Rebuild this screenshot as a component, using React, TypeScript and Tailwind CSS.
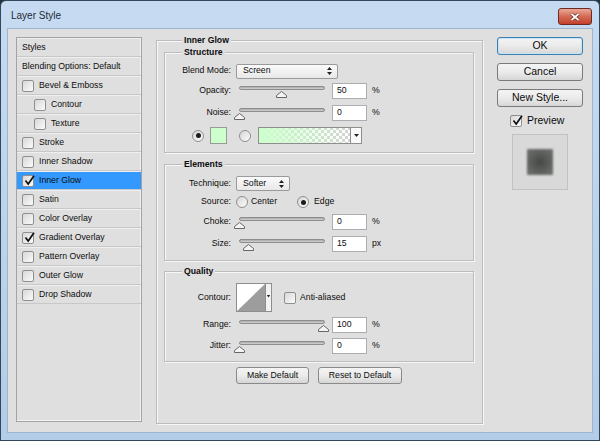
import React from 'react';

const Check = ({ checked }: { checked?: boolean }) => (
  <span className="relative flex h-[12px] w-[12px] shrink-0 items-center justify-center rounded-[2px] border border-[#8e8f8f] bg-gradient-to-br from-[#d8d8d8] to-[#fbfbfb]">
    {checked && (
      <svg className="absolute left-[1px] top-[-1px]" width="11" height="11" viewBox="0 0 11 11">
        <path d="M1.5 5.5 L4.2 9 L10 0.8" fill="none" stroke="#111" strokeWidth="1.7" />
      </svg>
    )}
  </span>
);

const Radio = ({ on }: { on?: boolean }) => (
  <span className="flex h-[12px] w-[12px] shrink-0 items-center justify-center rounded-full border border-[#8e8f8f] bg-gradient-to-br from-[#d6d6d6] to-[#fcfcfc]">
    {on && <span className="h-[5px] w-[5px] rounded-full bg-[#1c1c1c]" />}
  </span>
);

const UpDown = () => (
  <svg width="5" height="8" viewBox="0 0 5 8">
    <path d="M0 3 L2.5 0 L5 3Z M0 5 L2.5 8 L5 5Z" fill="#222" />
  </svg>
);

const Select = ({ value, className }: { value: string; className: string }) => (
  <div className={`flex h-[15px] items-center justify-between rounded-[2px] border border-[#9a9a9a] bg-gradient-to-b from-[#fbfbfb] to-[#e8e8e8] pl-[6px] pr-[5px] ${className}`}>
    <span>{value}</span>
    <UpDown />
  </div>
);

// at = thumb centre offset from the track's left end, in px
const Slider = ({ at }: { at: number }) => (
  <div className="relative h-[16px] w-[93px] shrink-0">
    <div className="absolute left-[3px] top-[3px] h-[4px] w-[86px] rounded-full border border-[#8d8d8d] bg-gradient-to-b from-[#a8a8a8] to-[#d4d4d4]" />
    <svg className="absolute top-[8px]" style={{ left: at - 2.5 }} width="11" height="7" viewBox="0 0 11 7">
      <path d="M5.5 0.5 L10.5 4.5 V6.5 H0.5 V4.5 Z" fill="#f4f4f4" stroke="#666" />
    </svg>
  </div>
);

const Num = ({ value }: { value: string }) => (
  <div className="ml-[3px] flex h-[16px] w-[35px] shrink-0 items-center border border-[#abadb3] bg-white pl-[4px]">
    {value}
  </div>
);

const Label = ({ children }: { children: React.ReactNode }) => (
  <span className="w-[71px] shrink-0 pr-[5px] text-right">{children}</span>
);

const SliderRow = ({ label, at, value, unit, className }: { label: string; at: number; value: string; unit: string; className: string }) => (
  <div className={`flex h-[16px] items-center ${className}`}>
    <Label>{label}</Label>
    <Slider at={at} />
    <Num value={value} />
    <span className="ml-[5px]">{unit}</span>
  </div>
);

const Group = ({ title, className = '', legend = 'ml-[17px]', children }: { title: string; className?: string; legend?: string; children: React.ReactNode }) => (
  <div className={`border border-[#bcbcbc] shadow-[inset_1px_1px_0_#f7f7f7,1px_1px_0_#f7f7f7] ${className}`}>
    <div className={`-mt-[6px] w-fit bg-[#dfdfdf] px-[2px] font-bold leading-[11px] ${legend}`}>{title}</div>
    {children}
  </div>
);

const styleRows: { name: string; box?: boolean; indent?: boolean; checked?: boolean; selected?: boolean }[] = [
  { name: 'Styles' },
  { name: 'Blending Options: Default' },
  { name: 'Bevel & Emboss', box: true },
  { name: 'Contour', box: true, indent: true },
  { name: 'Texture', box: true, indent: true },
  { name: 'Stroke', box: true },
  { name: 'Inner Shadow', box: true },
  { name: 'Inner Glow', box: true, checked: true, selected: true },
  { name: 'Satin', box: true },
  { name: 'Color Overlay', box: true },
  { name: 'Gradient Overlay', box: true, checked: true },
  { name: 'Pattern Overlay', box: true },
  { name: 'Outer Glow', box: true },
  { name: 'Drop Shadow', box: true },
];

const btn =
  'flex items-center justify-center rounded-[3px] border bg-gradient-to-b from-[#f4f4f4] via-[#ebebeb] to-[#d6d6d6]';

export default function App() {
  return (
    <div className="h-[441px] w-[600px] bg-[#26313d] font-['Liberation_Sans',Arial,sans-serif] text-[8.7px] text-[#0c0c0c]">
      <div className="flex h-full flex-col rounded-t-[6px] border border-[#33475c] bg-gradient-to-b from-[#c6dbf1] to-[#b3cce7] px-[6px] pb-[7px]">
        {/* title bar */}
        <div className="flex h-[27px] shrink-0 items-start justify-between">
          <span className="ml-[4px] mt-[9px] text-[10px] leading-[12px] text-[#1b2a3a]">Layer Style</span>
          <div className="mr-[1px] mt-[7px] flex h-[17px] w-[34px] items-center justify-center rounded-[3px] border border-[#6b2b22] bg-gradient-to-b from-[#eaa898] via-[#d36a54] to-[#c23f29]">
            <svg width="10" height="8" viewBox="0 0 10 8">
              <path d="M1.5 1 L8.5 7 M8.5 1 L1.5 7" stroke="#5a2018" strokeWidth="3" />
              <path d="M1.5 1 L8.5 7 M8.5 1 L1.5 7" stroke="#fff" strokeWidth="1.8" />
            </svg>
          </div>
        </div>

        {/* client area */}
        <div className="flex flex-1 gap-[14px] border border-[#9fb5cd] bg-[#dfdfdf] pl-[8px] pt-[8px]">
          {/* styles list */}
          <div className="flex h-[385px] w-[126px] shrink-0 flex-col border border-[#a3a3a3] shadow-[inset_-1px_-1px_0_#f2f2f2]">
            {styleRows.map((r) => (
              <div
                key={r.name}
                className={`flex h-[19px] shrink-0 items-center border-b border-[#c8c8c8] pt-[1px] shadow-[inset_0_1px_0_#efefef] ${r.indent ? 'pl-[17px]' : 'pl-[5px]'} ${r.selected ? 'bg-[#3399ff]' : ''}`}
              >
                {r.box && <Check checked={r.checked} />}
                <span className={r.box ? 'ml-[5px]' : ''}>{r.name}</span>
              </div>
            ))}
          </div>

          {/* settings */}
          <Group title="Inner Glow" legend="ml-[18px]" className="mt-[3px] h-[384px] w-[327px] shrink-0 pl-[7px] pr-[8px]">
            <Group title="Structure" className="mt-[6px] pb-[8px]">
              <div className="mt-[5px] flex h-[16px] items-center">
                <Label>Blend Mode:</Label>
                <Select value="Screen" className="w-[102px]" />
              </div>
              <SliderRow label="Opacity:" at={42.5} value="50" unit="%" className="mt-[4px]" />
              <SliderRow label="Noise:" at={0} value="0" unit="%" className="mt-[6px]" />
              <div className="mt-[6px] flex h-[17px] items-center pl-[27px]">
                <Radio on />
                <div className="ml-[6px] h-[17px] w-[17px] border border-[#9a9a9a] bg-[#ccffcc]" />
                <span className="ml-[12px]">
                  <Radio />
                </span>
                <svg className="ml-[7px]" width="104" height="17" viewBox="0 0 104 17">
                  <defs>
                    <pattern id="chk" width="6" height="6" patternUnits="userSpaceOnUse">
                      <rect width="6" height="6" fill="#ffffff" />
                      <rect width="3" height="3" fill="#d4d4d4" />
                      <rect x="3" y="3" width="3" height="3" fill="#d4d4d4" />
                    </pattern>
                    <linearGradient id="glow" x1="0" x2="1" y1="0" y2="0">
                      <stop offset="0" stopColor="#ccffcc" stopOpacity="1" />
                      <stop offset="1" stopColor="#ccffcc" stopOpacity="0" />
                    </linearGradient>
                  </defs>
                  <rect x="0.5" y="0.5" width="92" height="16" fill="url(#chk)" />
                  <rect x="0.5" y="0.5" width="92" height="16" fill="url(#glow)" />
                  <rect x="92.5" y="0.5" width="11" height="16" fill="#fafafa" />
                  <rect x="0.5" y="0.5" width="103" height="16" fill="none" stroke="#8e8e8e" />
                  <path d="M92.5 0.5 V16.5" stroke="#8e8e8e" />
                  <path d="M96 7 H101 L98.5 10 Z" fill="#222" />
                </svg>
              </div>
            </Group>

            <Group title="Elements" className="mt-[11px] pb-[8px]">
              <div className="mt-[6px] flex h-[15px] items-center">
                <Label>Technique:</Label>
                <Select value="Softer" className="w-[54px]" />
              </div>
              <div className="mt-[4px] flex h-[14px] items-center">
                <Label>Source:</Label>
                <div className="flex w-[61px] items-center">
                  <Radio />
                  <span className="ml-[3px]">Center</span>
                </div>
                <Radio on />
                <span className="ml-[5px]">Edge</span>
              </div>
              <SliderRow label="Choke:" at={0} value="0" unit="%" className="mt-[5px]" />
              <SliderRow label="Size:" at={9} value="15" unit="px" className="mt-[6px]" />
            </Group>

            <Group title="Quality" className="mt-[10px] pb-[7px]">
              <div className="mt-[6px] flex h-[29px] items-center">
                <Label>Contour:</Label>
                <svg width="36" height="29" viewBox="0 0 36 29">
                  <rect x="0.5" y="0.5" width="35" height="28" fill="#ffffff" stroke="#8e8e8e" />
                  <path d="M1 28 L29 1 V28 Z" fill="#9d9d9d" />
                  <rect x="29.5" y="0.5" width="6" height="28" fill="#f2f2f2" stroke="#8e8e8e" />
                  <path d="M30.8 12 H34.2 L32.5 14.5 Z" fill="#222" />
                </svg>
                <span className="ml-[12px]">
                  <Check />
                </span>
                <span className="ml-[4px]">Anti-aliased</span>
              </div>
              <SliderRow label="Range:" at={84} value="100" unit="%" className="mt-[5px]" />
              <SliderRow label="Jitter:" at={0} value="0" unit="%" className="mt-[5px]" />
            </Group>

            <div className="mt-[5px] flex pl-[72px]">
              <div className={`${btn} h-[17px] w-[73px] border-[#8a8a8a]`}>Make Default</div>
              <div className={`${btn} ml-[9px] h-[17px] w-[84px] border-[#8a8a8a]`}>Reset to Default</div>
            </div>
          </Group>

          {/* right column */}
          <div className="flex w-[86px] shrink-0 flex-col text-[10.5px]">
            <div className={`${btn} h-[18px] border-[#3c7fb1] shadow-[inset_0_0_0_1px_#c6e4f7]`}>OK</div>
            <div className={`${btn} mt-[8px] h-[18px] border-[#7a7a7a]`}>Cancel</div>
            <div className={`${btn} mt-[8px] h-[18px] border-[#7a7a7a]`}>New Style...</div>
            <div className="mt-[8px] flex h-[12px] items-center pl-[13px]">
              <Check checked />
              <span className="ml-[5px]">Preview</span>
            </div>
            <div className="ml-[15px] mt-[7px] flex h-[56px] w-[56px] items-center justify-center border border-[#c2c2c2] bg-[#d9d9d9]">
              <div className="h-[26px] w-[26px] bg-[radial-gradient(circle,#454845,#737573)] blur-[0.8px]" />
            </div>
          </div>
        </div>
      </div>
    </div>
  );
}
